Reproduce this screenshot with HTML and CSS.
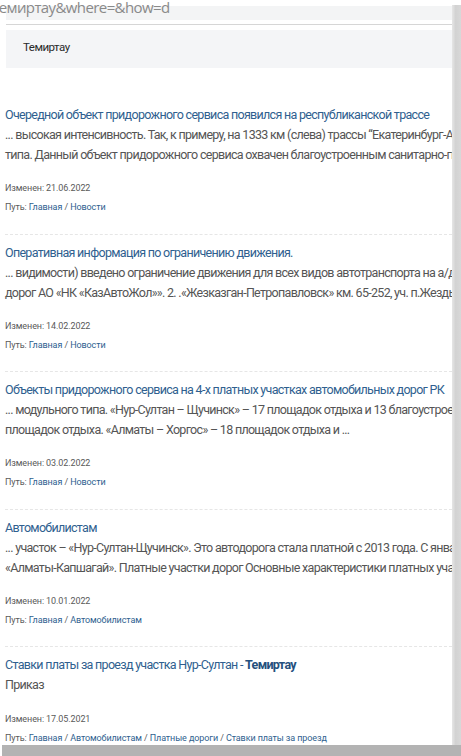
FILE: index.html
```html
<!DOCTYPE html>
<html lang="ru">
<head>
<meta charset="utf-8">
<title>Поиск</title>
<link rel="stylesheet" href="styles.css">
</head>
<body>
<div class="frame">
  <main class="card">
    <div class="search">
      <div class="urlbar"></div>
      <div class="urltext">Темиртау&amp;where=&amp;how=d</div>
      <div class="rule"></div>
      <div class="query">Темиртау</div>
    </div>

    <div class="results">
      <article class="item">
        <a class="title" href="#">Очередной объект придорожного сервиса появился на республиканской трассе</a>
        <div class="snippet">
          <span class="line">... высокая интенсивность. Так, к примеру, на 1333 км (слева) трассы “Екатеринбург-Алматы” построен объект</span>
          <span class="line">типа. Данный объект придорожного сервиса охвачен благоустроенным санитарно-гигиеническим узлом</span>
        </div>
        <div class="meta">Изменен: 21.06.2022</div>
        <div class="path">Путь: <a href="#">Главная</a> / <a href="#">Новости</a></div>
      </article>

      <article class="item">
        <a class="title" href="#">Оперативная информация по ограничению движения.</a>
        <div class="snippet">
          <span class="line">... видимости) введено ограничение движения для всех видов автотранспорта на а/д: республиканских</span>
          <span class="line">дорог АО «НК «КазАвтоЖол»». 2. .«Жезказган-Петропавловск» км. 65-252, уч. п.Жезды-Улытау</span>
        </div>
        <div class="meta">Изменен: 14.02.2022</div>
        <div class="path">Путь: <a href="#">Главная</a> / <a href="#">Новости</a></div>
      </article>

      <article class="item">
        <a class="title" href="#">Объекты придорожного сервиса на 4-х платных участках автомобильных дорог РК</a>
        <div class="snippet">
          <span class="line">... модульного типа. «Нур-Султан – Щучинск» – 17 площадок отдыха и 13 благоустроенных</span>
          <span class="line">площадок отдыха. «Алматы – Хоргос» – 18 площадок отдыха и ...</span>
        </div>
        <div class="meta">Изменен: 03.02.2022</div>
        <div class="path">Путь: <a href="#">Главная</a> / <a href="#">Новости</a></div>
      </article>

      <article class="item">
        <a class="title" href="#">Автомобилистам</a>
        <div class="snippet">
          <span class="line">... участок – «Нур-Султан-Щучинск». Это автодорога стала платной с 2013 года. С января 2019</span>
          <span class="line">«Алматы-Капшагай». Платные участки дорог Основные характеристики платных участков</span>
        </div>
        <div class="meta">Изменен: 10.01.2022</div>
        <div class="path">Путь: <a href="#">Главная</a> / <a href="#">Автомобилистам</a></div>
      </article>

      <article class="item last">
        <a class="title" href="#">Ставки платы за проезд участка Нур-Султан - <b>Темиртау</b></a>
        <div class="snippet">
          <span class="line">Приказ</span>
        </div>
        <div class="meta">Изменен: 17.05.2021</div>
        <div class="path">Путь: <a href="#">Главная</a> / <a href="#">Автомобилистам</a> / <a href="#">Платные дороги</a> / <a href="#">Ставки платы за проезд</a></div>
      </article>
    </div>
  </main>
  <div class="shadow-right"></div>
  <div class="shadow-bottom"></div>
</div>
</body>
</html>
```

FILE: styles.css
```css
* { box-sizing: border-box; }

html, body {
  margin: 0;
  padding: 0;
  background: #ffffff;
}

body {
  font-family: Roboto, "Liberation Sans", Arial, sans-serif;
  width: 461px;
  height: 756px;
  overflow: hidden;
}

.frame {
  display: grid;
  grid-template-columns: 452px 9px;
  grid-template-rows: 745px 11px;
}

.card {
  grid-column: 1;
  grid-row: 1;
  background: #ffffff;
  overflow: hidden;
}

.shadow-right {
  grid-column: 2;
  grid-row: 1;
  margin-top: 5px;
  background: linear-gradient(to right, #e6e6e6 0%, #d2d2d2 40%, #d8d8d8 100%);
}

.shadow-bottom {
  grid-column: 1 / 3;
  grid-row: 2;
  margin-left: 2px;
  background: #b3b3b3;
}

/* search header */
.search {
  position: relative;
  padding-left: 6px;
}

.urlbar {
  height: 14px;
  margin-top: 6px;
  background: #f3f4f5;
}

.urltext {
  position: absolute;
  top: -9px;
  left: -9px;
  font-family: "Open Sans", Roboto, sans-serif;
  font-size: 15px;
  line-height: 20px;
  color: #8a8a8a;
  letter-spacing: -0.6px;
  white-space: nowrap;
}

.rule {
  height: 1px;
  margin-top: 4px;
  background: #d6d6d6;
}

.query {
  margin-top: 5px;
  height: 38px;
  background: #f4f5f7;
  padding-left: 17px;
  font-size: 11.5px;
  letter-spacing: -0.5px;
  line-height: 34px;
  color: #2a2a2a;
}

/* results */
.results {
  margin-top: 29px;
  padding-left: 5px;
}

.item {
  padding: 8px 0 16.5px;
  border-bottom: 1px dashed #e6e6e6;
}

.item.last {
  border-bottom: none;
}

.title {
  display: block;
  font-size: 12.5px;
  letter-spacing: -0.7px;
  line-height: 20px;
  color: #2f5f8f;
  text-decoration: none;
  white-space: nowrap;
}

.title b {
  font-weight: 700;
  color: #24507d;
}

.snippet {
  font-size: 12.5px;
  letter-spacing: -0.7px;
  line-height: 20px;
  color: #555555;
  margin-bottom: 14px;
}

.item.last .snippet {
  margin-bottom: 15px;
}

.line {
  display: block;
  white-space: nowrap;
}

.meta,
.path {
  font-size: 9px;
  letter-spacing: -0.1px;
  line-height: 19px;
  color: #5a5a5a;
  white-space: nowrap;
}

.path a {
  color: #2f5f8f;
  text-decoration: none;
}
```
